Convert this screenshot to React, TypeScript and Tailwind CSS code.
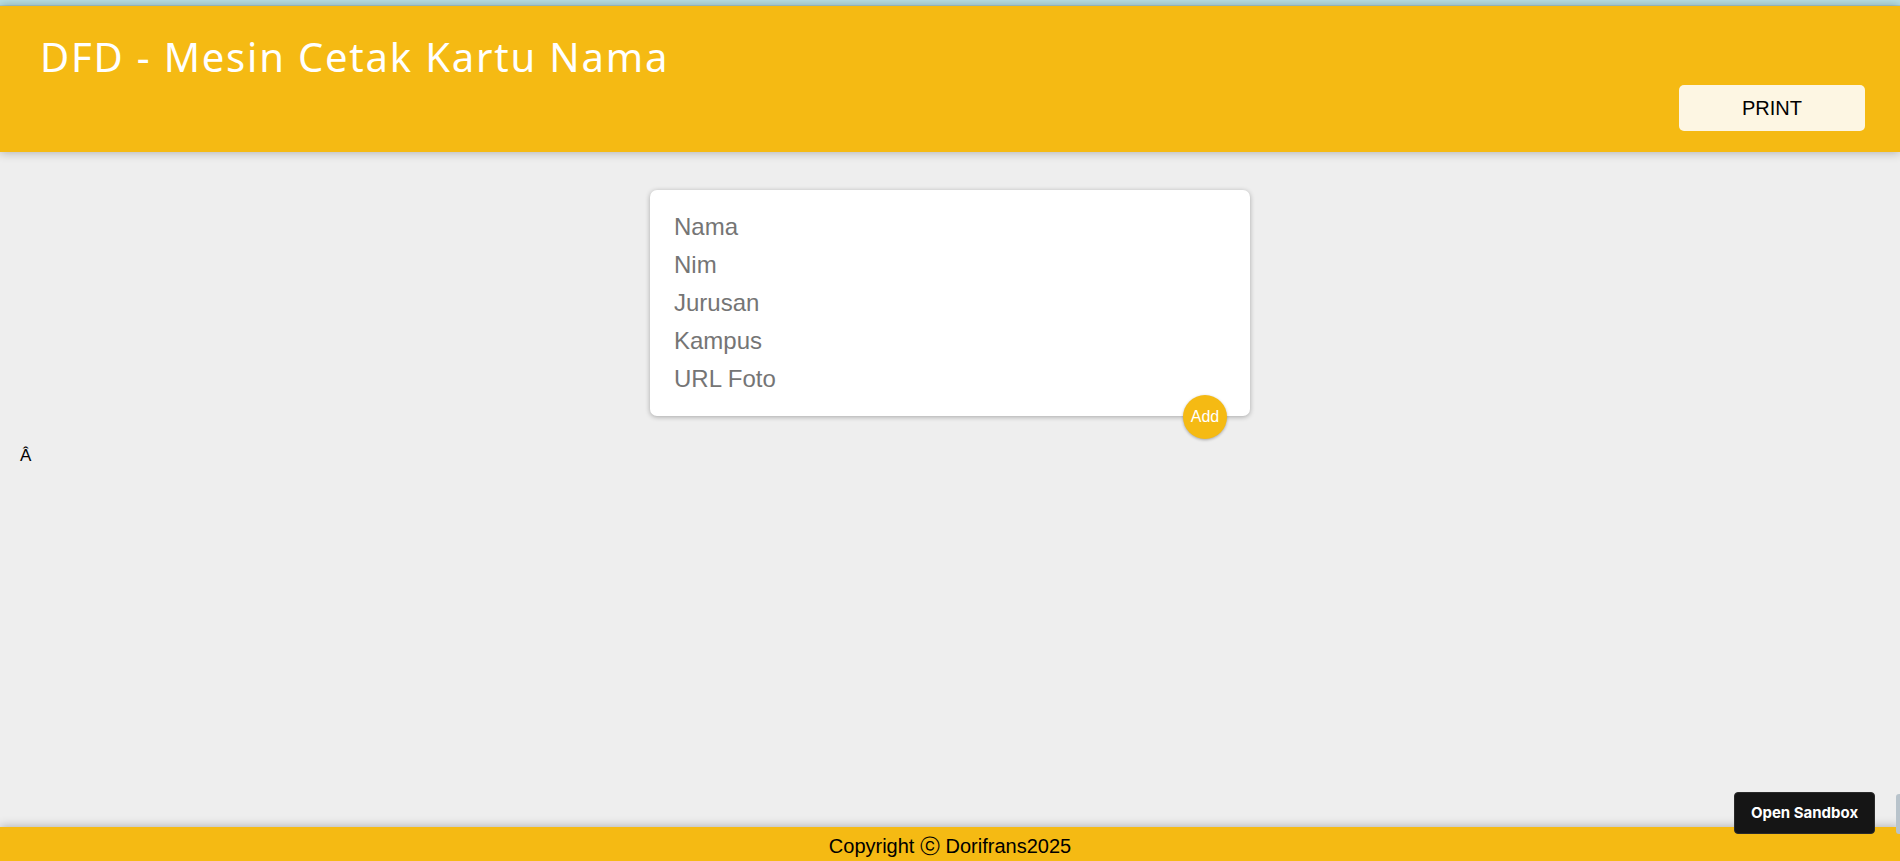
import React from "react";

const fields = ["Nama", "Nim", "Jurusan", "Kampus", "URL Foto"];

export default function App() {
  return (
    <div className="relative flex h-[861px] flex-col overflow-hidden bg-[#eeeeee] font-['Liberation_Sans',Arial,sans-serif]">
      {/* top strip */}
      <div className="h-[6px] shrink-0 border-b border-[#a9cfd6] bg-[#b9e1e6]" />

      {/* Header */}
      <header className="relative z-10 flex shrink-0 flex-col bg-[#f5ba13] pl-[40px] pr-[35px] pt-[27px] pb-[21px] shadow-[0_0_10px_0_rgba(0,0,0,0.3)]">
        <h1 className="font-['Noto_Sans',sans-serif] text-[40px] leading-[48px] font-normal tracking-[1.8px] text-white">
          DFD - Mesin Cetak Kartu Nama
        </h1>
        <button className="mt-[4px] h-[46px] w-[186px] self-end rounded-[5px] bg-[#fdf6e3] text-[20px] text-black">
          PRINT
        </button>
      </header>

      {/* Main */}
      <main className="flex-1">
        <form className="relative mx-auto mt-[38px] w-[600px] rounded-[7px] bg-white px-[24px] py-[18px] shadow-[0_1px_5px_rgba(0,0,0,0.3)]">
          {fields.map((f) => (
            <input
              key={f}
              placeholder={f}
              className="block h-[38px] w-full bg-transparent text-[24px] leading-[38px] outline-none placeholder:text-[#757575]"
            />
          ))}
          <button
            type="button"
            className="absolute right-[23px] bottom-[-23px] flex h-[44px] w-[44px] items-center justify-center rounded-full bg-[#f5ba13] text-[16px] text-white shadow-[0_1px_3px_rgba(0,0,0,0.3)]"
          >
            Add
          </button>
        </form>
        <p className="mt-[28px] pl-[20px] text-[17px] leading-[24px] text-black">Â</p>
      </main>

      {/* Footer */}
      <footer className="relative z-10 h-[34px] shrink-0 bg-[#f5ba13] pt-[8px] text-center text-[20px] leading-[23px] text-black shadow-[0_0_10px_0_rgba(0,0,0,0.3)]">
        Copyright ⓒ Dorifrans2025
      </footer>

      {/* Sandbox overlay */}
      <div className="absolute right-[25px] bottom-[27px] z-20 flex h-[42px] w-[141px] items-center justify-center rounded-[4px] border border-[#2a2a2a] bg-[#151515] font-['Inter',sans-serif] text-[15px] font-bold text-white">
        Open Sandbox
      </div>
      <div className="absolute right-0 bottom-[27px] z-20 h-[40px] w-[4px] rounded-l-[3px] bg-[#b8c3cb]" />
    </div>
  );
}
